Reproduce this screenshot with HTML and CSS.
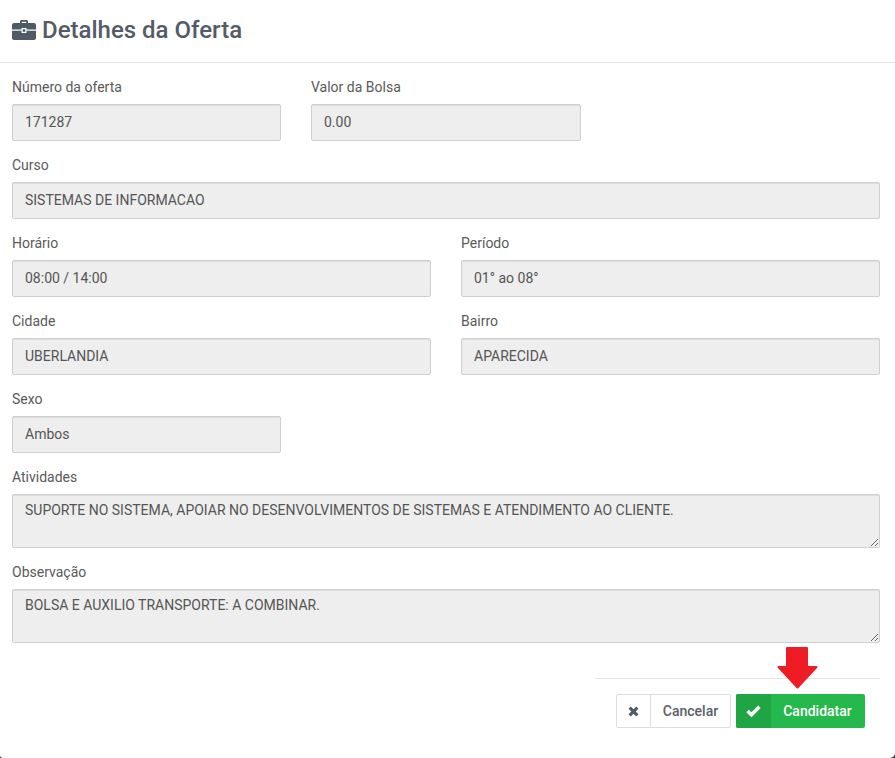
FILE: index.html
```html
<!DOCTYPE html>
<html lang="pt">
<head>
<meta charset="utf-8">
<title>Detalhes da Oferta</title>
<link rel="stylesheet" href="styles.css">
</head>
<body>
<div class="modal">
  <header class="modal-header">
    <h4 class="modal-title">
      <svg class="title-icon" viewBox="0 0 24 20" width="24" height="20" aria-hidden="true">
        <path d="M8 3V1.6C8 .7 8.7 0 9.6 0h4.8C15.300 0 16 .7 16 1.600V3h6c1.100 0 2 .9 2 2v4.500H14.500V8h-5v1.500H0V5c0-1.100.9-2 2-2h6zM9.800 1.800V3h4.400V1.800H9.800z" fill-rule="evenodd"/>
        <path d="M0 10.800h9.500v2.200h5v-2.200H24V18c0 1.100-.9 2-2 2H2c-1.100 0-2-.9-2-2v-7.200z"/>
        <rect x="10.700" y="9.200" width="2.600" height="2.600"/>
      </svg>
      <span>Detalhes da Oferta</span>
    </h4>
  </header>
  <form class="modal-body">
    <div class="row">
      <div class="field third"><label>Número da oferta</label><div class="input">171287</div></div>
      <div class="field third"><label>Valor da Bolsa</label><div class="input">0.00</div></div>
    </div>
    <div class="row">
      <div class="field full"><label>Curso</label><div class="input">SISTEMAS DE INFORMACAO</div></div>
    </div>
    <div class="row">
      <div class="field half"><label>Horário</label><div class="input">08:00 / 14:00</div></div>
      <div class="field half"><label>Período</label><div class="input">01° ao 08°</div></div>
    </div>
    <div class="row">
      <div class="field half"><label>Cidade</label><div class="input">UBERLANDIA</div></div>
      <div class="field half"><label>Bairro</label><div class="input">APARECIDA</div></div>
    </div>
    <div class="row">
      <div class="field third"><label>Sexo</label><div class="input">Ambos</div></div>
    </div>
    <div class="row">
      <div class="field full"><label>Atividades</label><textarea class="input area" disabled>SUPORTE NO SISTEMA, APOIAR NO DESENVOLVIMENTOS DE SISTEMAS E ATENDIMENTO AO CLIENTE.</textarea></div>
    </div>
    <div class="row">
      <div class="field full"><label>Observação</label><textarea class="input area" disabled>BOLSA E AUXILIO TRANSPORTE: A COMBINAR.</textarea></div>
    </div>
  </form>
  <footer class="modal-footer">
    <div class="actions">
      <button type="button" class="btn btn-cancel">
        <span class="btn-icon"><svg viewBox="0 0 12 12" width="11" height="11" aria-hidden="true"><path d="M3 .6 6 3.600 9 .6 11.400 3 8.400 6l3 3L9 11.400l-3-3-3 3L.6 9l3-3-3-3z"/></svg></span>
        <span class="btn-text">Cancelar</span>
      </button>
      <button type="button" class="btn btn-ok">
        <span class="btn-icon"><svg viewBox="0 0 14 12" width="15" height="13" aria-hidden="true"><path d="M5.100 11.400.3 6.600l2.300-2.300 2.500 2.500L11.400.5l2.300 2.300z"/></svg></span>
        <span class="btn-text">Candidatar</span>
      </button>
    </div>
  </footer>
  <svg class="arrow" viewBox="0 0 41 42" width="41" height="42" aria-hidden="true"><path d="M10 1h20v19h9.500L20.500 40.500 1.500 20H10z"/></svg>
</div>
</body>
</html>
```
FILE: styles.css
```css
* { box-sizing: border-box; }
html, body { margin: 0; padding: 0; height: 100%; }
body {
  background: #3a3a3a;
  font-family: Roboto, "Liberation Sans", sans-serif;
  font-size: 14px;
  color: #555;
  overflow: hidden;
}
.modal {
  position: relative;
  width: 895px;
  height: 758px;
  background: #fff;
  border-radius: 0 0 5px 3px;
}
.modal-header {
  height: 63px;
  padding: 15px 12px 0;
  border-bottom: 1px solid #e5e5e5;
}
.modal-title {
  display: flex;
  align-items: center;
  gap: 6px;
  margin: 0;
  height: 30px;
  font-size: 24px;
  font-weight: 500;
  line-height: 30px;
  color: #535c66;
}
.title-icon { fill: #505a64; flex: none; }
.modal-body {
  display: flex;
  flex-direction: column;
  gap: 15px;
  padding: 15px 15px 0 12px;
}
.row { display: flex; gap: 30px; }
.field { display: flex; flex-direction: column; }
.third { width: 269px; }
.third + .third { width: 270px; }
.half { width: 419px; }
.full { width: 868px; }
label {
  display: block;
  height: 20px;
  margin-bottom: 6px;
  line-height: 18px;
  color: #5a5a5a;
}
.input {
  display: block;
  width: 100%;
  height: 37px;
  padding: 7px 12px 9px;
  font: 14px/20px Roboto, "Liberation Sans", sans-serif;
  color: #555;
  background: #eee;
  border: 1px solid #cfcfcf;
  border-radius: 2px;
  box-shadow: inset 0 1px 1px rgba(0,0,0,.075);
}
.area {
  height: 54px;
  padding: 5px 12px;
  margin: 0;
  resize: vertical;
  opacity: 1;
  -webkit-text-fill-color: #555;
}
.modal-footer { padding: 35px 15px 0 0; }
.actions {
  display: flex;
  justify-content: flex-end;
  gap: 5px;
  width: 285px;
  height: 50px;
  margin-left: auto;
  padding: 15px 15px 0 0;
  border-top: 1px solid #e5e5e5;
}
.btn {
  display: flex;
  align-items: stretch;
  height: 34px;
  padding: 0;
  border-radius: 2px;
  font: 500 14px/20px Roboto, "Liberation Sans", sans-serif;
  cursor: pointer;
}
.btn-icon { display: flex; align-items: center; justify-content: center; width: 34px; }
.btn-text { display: flex; align-items: center; justify-content: center; flex: 1; }
.btn-cancel {
  width: 115px;
  color: #5a6068;
  background: #fff;
  border: 1px solid #ddd;
}
.btn-cancel .btn-icon { border-right: 1px solid #ddd; fill: #4f5b66; }
.btn-ok {
  width: 129px;
  color: #fff;
  background: #25b84c;
  border: 0;
}
.btn-ok .btn-icon { width: 35px; background: #20a544; border-radius: 2px 0 0 2px; fill: #fff; }
.btn-ok .btn-text { padding-right: 1px; }
.arrow {
  position: absolute;
  left: 777px;
  top: 647px;
  fill: #ee1c25;
  stroke: #ee1c25;
  stroke-width: 2;
  stroke-linejoin: round;
}
```
